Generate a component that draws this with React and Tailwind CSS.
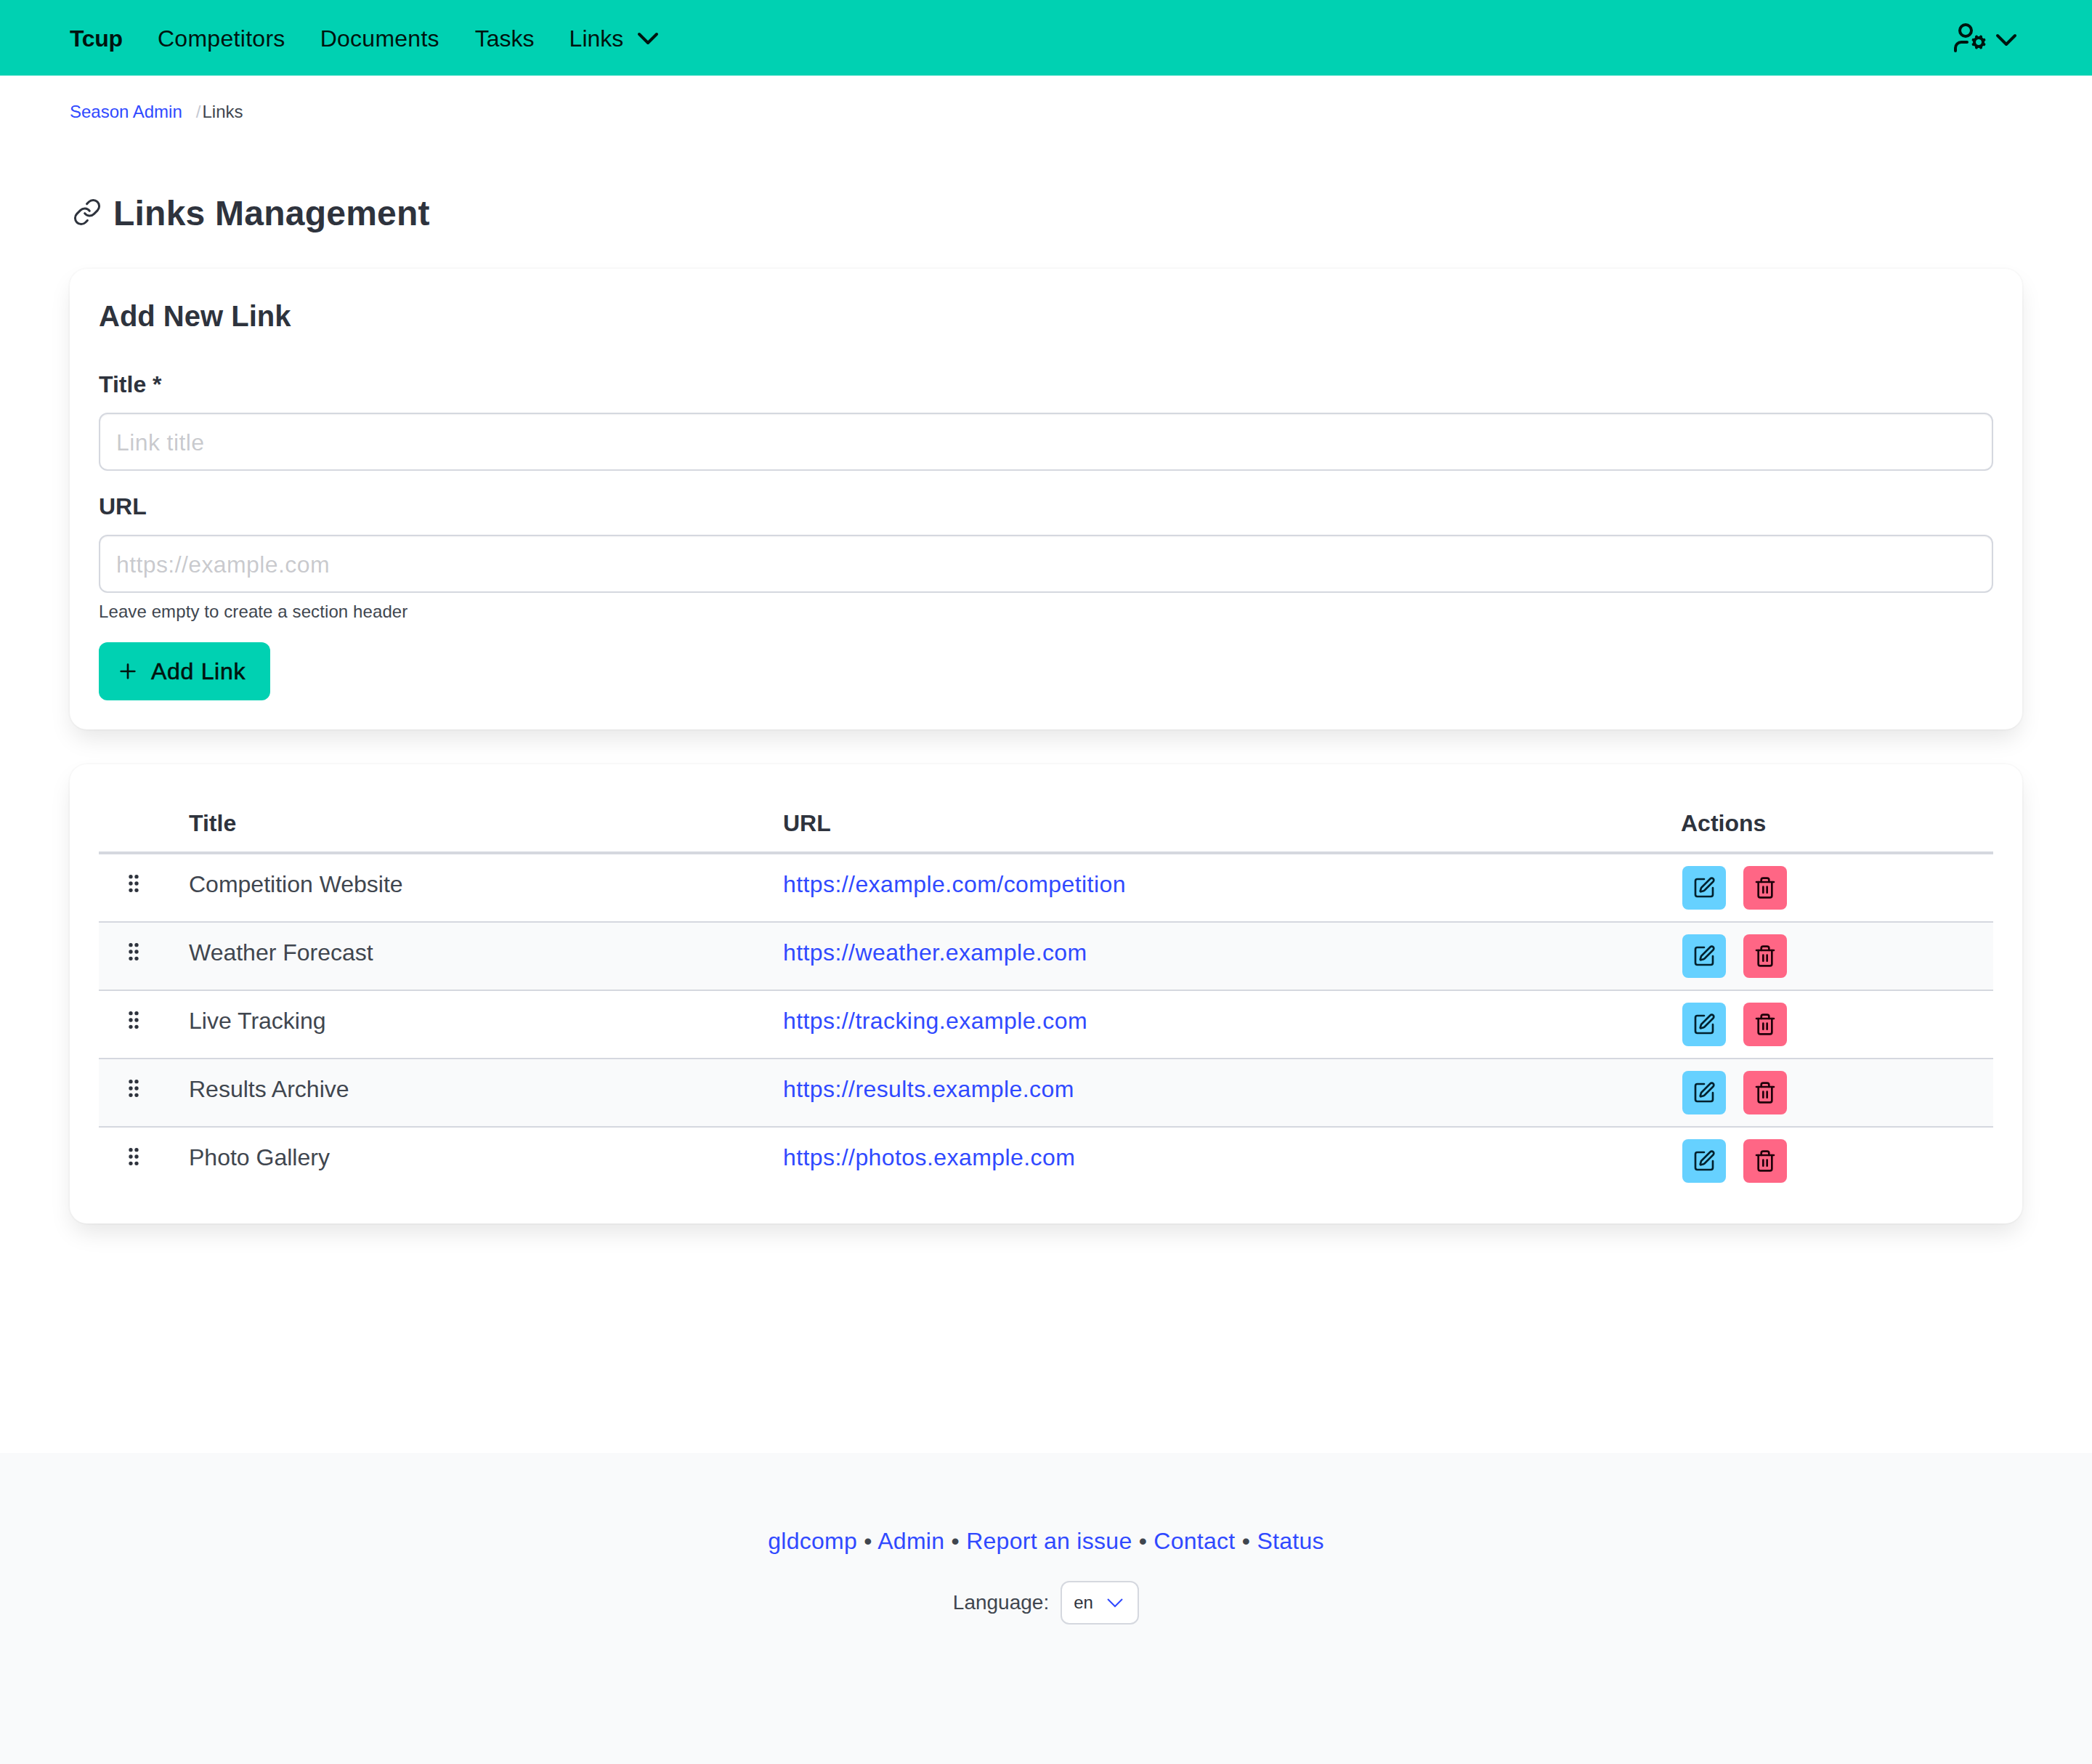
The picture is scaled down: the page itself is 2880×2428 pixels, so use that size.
import { ChevronDown, GripVertical, Link as LinkIcon, Plus, SquarePen, Trash2, UserCog } from "lucide-react";

const LINKS = [
  { title: "Competition Website", url: "https://example.com/competition" },
  { title: "Weather Forecast", url: "https://weather.example.com" },
  { title: "Live Tracking", url: "https://tracking.example.com" },
  { title: "Results Archive", url: "https://results.example.com" },
  { title: "Photo Gallery", url: "https://photos.example.com" },
];

const FOOTER_LINKS = ["gldcomp", "Admin", "Report an issue", "Contact", "Status"];

const CARD = "rounded-[24px] bg-white p-[40px] shadow-[0_16px_32px_-4px_rgba(10,10,10,0.1),0_0_0_2px_rgba(10,10,10,0.02)]";
const INPUT = "block h-[80px] w-full rounded-[12px] border-2 border-[#d5d8df] bg-white px-[22px] pt-[2px] text-[32px] tracking-[0.4px] text-[#40464f] placeholder:text-[#4046544d] shadow-[inset_0_1px_2px_rgba(10,10,10,0.05)] outline-none";

function Navbar() {
  return (
    <nav className="flex h-[104px] items-center justify-between bg-[#00d1b2] px-[96px] text-[32px] text-[#00140f]">
      <div className="flex items-center gap-[48px] pt-[2px]">
        <a className="font-bold tracking-[-0.3px]">Tcup</a>
        <a className="tracking-[0.3px]">Competitors</a>
        <a className="tracking-[0.25px]">Documents</a>
        <a className="ml-[1px]">Tasks</a>
        <a className="flex items-center">
          Links
          <ChevronDown size={48} className="ml-[10px]" />
        </a>
      </div>
      <div className="mr-[-2px] flex items-center">
        <UserCog size={48} />
        <ChevronDown size={48} className="ml-[2px] mt-[6px]" />
      </div>
    </nav>
  );
}

function AddLinkForm() {
  return (
    <section className={CARD}>
      <h2 className="text-[40px] font-semibold leading-[50px] text-[#2e333d]">Add New Link</h2>
      <label className="mt-[45px] mb-[15px] block text-[32px] font-semibold leading-[48px] text-[#2e333d]">Title *</label>
      <input className={INPUT} placeholder="Link title" />
      <label className="mt-[25px] mb-[15px] block text-[32px] font-semibold leading-[48px] text-[#2e333d]">URL</label>
      <input className={INPUT} placeholder="https://example.com" />
      <p className="mt-[8px] text-[24px] leading-[36px] tracking-[0.1px] text-[#40464f]">Leave empty to create a section header</p>
      <button
        type="button"
        className="mt-[24px] flex h-[80px] w-[236px] items-center rounded-[12px] bg-[#00d1b2] pl-[24px] text-[32px] tracking-[0.7px] text-[#00140f] [-webkit-text-stroke:0.6px_#00140f]"
      >
        <Plus size={32} className="mr-[16px]" />
        Add Link
      </button>
    </section>
  );
}

function LinksTable() {
  return (
    <section className={`${CARD} mt-[48px]`}>
      <table className="w-full table-fixed border-collapse text-[32px] leading-[48px]">
        <colgroup>
          <col className="w-[100px]" />
          <col className="w-[818px]" />
          <col className="w-[1236px]" />
          <col />
        </colgroup>
        <thead>
          <tr className="border-b-4 border-[#d5d8df] text-left text-[#2e333d]">
            <th></th>
            <th className="px-[24px] pt-[17px] pb-[15px] font-semibold">Title</th>
            <th className="px-[24px] pt-[17px] pb-[15px] font-semibold">URL</th>
            <th className="px-[24px] pt-[17px] pb-[15px] font-semibold">Actions</th>
          </tr>
        </thead>
        <tbody>
          {LINKS.map((link, i) => (
            <tr key={link.title} className={`border-b-2 border-[#d5d8df] last:border-b-0 ${i % 2 === 1 ? "bg-[#f9fafb]" : ""}`}>
              <td className="py-[16px] pl-[20px] pr-[24px] align-top text-[#2e333d]">
                <div className="flex h-[48px] items-center justify-center">
                  <GripVertical size={32} />
                </div>
              </td>
              <td className="px-[24px] pt-[17px] pb-[15px] align-top text-[#40464f]">{link.title}</td>
              <td className="px-[24px] pt-[17px] pb-[15px] align-top">
                <a className="tracking-[0.42px] text-[#3049ff]">{link.url}</a>
              </td>
              <td className="px-[24px] py-[16px] align-top">
                <div className="ml-[2px] flex gap-[24px]">
                  <button type="button" className="flex h-[60px] w-[60px] items-center justify-center rounded-[8px] bg-[#66d1ff] text-[#00212e]">
                    <SquarePen size={32} />
                  </button>
                  <button type="button" className="flex h-[60px] w-[60px] items-center justify-center rounded-[8px] bg-[#ff6685] text-[#20000a]">
                    <Trash2 size={32} />
                  </button>
                </div>
              </td>
            </tr>
          ))}
        </tbody>
      </table>
    </section>
  );
}

function Footer() {
  return (
    <footer className="h-[428px] bg-[#f9fafb] pt-[97px] text-center text-[#40464f]">
      <p className="text-[32px] leading-[48px] tracking-[0.28px]">
        {FOOTER_LINKS.map((name, i) => (
          <span key={name}>
            {i > 0 && " • "}
            <a className="text-[#3049ff]">{name}</a>
          </span>
        ))}
      </p>
      <div className="mt-[31px] flex items-center justify-center gap-[16px] text-[28px]">
        <span>Language:</span>
        <div className="flex h-[60px] w-[108px] items-center rounded-[12px] border-2 border-[#d5d8df] bg-white pl-[16px] text-[24px] text-[#2e333d]">
          en
          <svg width="24" height="16" viewBox="0 0 24 16" fill="none" stroke="#3049ff" strokeWidth="2" className="ml-[18px]">
            <path d="M2 3l10 10L22 3" />
          </svg>
        </div>
      </div>
    </footer>
  );
}

export default function App() {
  return (
    <div className="flex min-h-screen flex-col bg-white font-['Liberation_Sans',Arial,sans-serif]">
      <Navbar />
      <main className="flex-1 px-[96px]">
        <div className="flex pt-[32px] text-[24px] leading-[36px]">
          <a className="text-[#3049ff]">Season Admin</a>
          <span className="ml-[19px] mr-[2px] text-[#c5c9d2]">/</span>
          <span className="text-[#40464f]">Links</span>
        </div>
        <h1 className="mt-[92px] mb-[46px] flex h-[60px] items-center text-[48px] font-semibold tracking-[0.23px] text-[#2e333d]">
          <span className="mb-[4px] flex w-[48px] justify-center">
            <LinkIcon size={40} strokeWidth={1.8} />
          </span>
          <span className="ml-[12px]">Links Management</span>
        </h1>
        <AddLinkForm />
        <LinksTable />
      </main>
      <Footer />
    </div>
  );
}
